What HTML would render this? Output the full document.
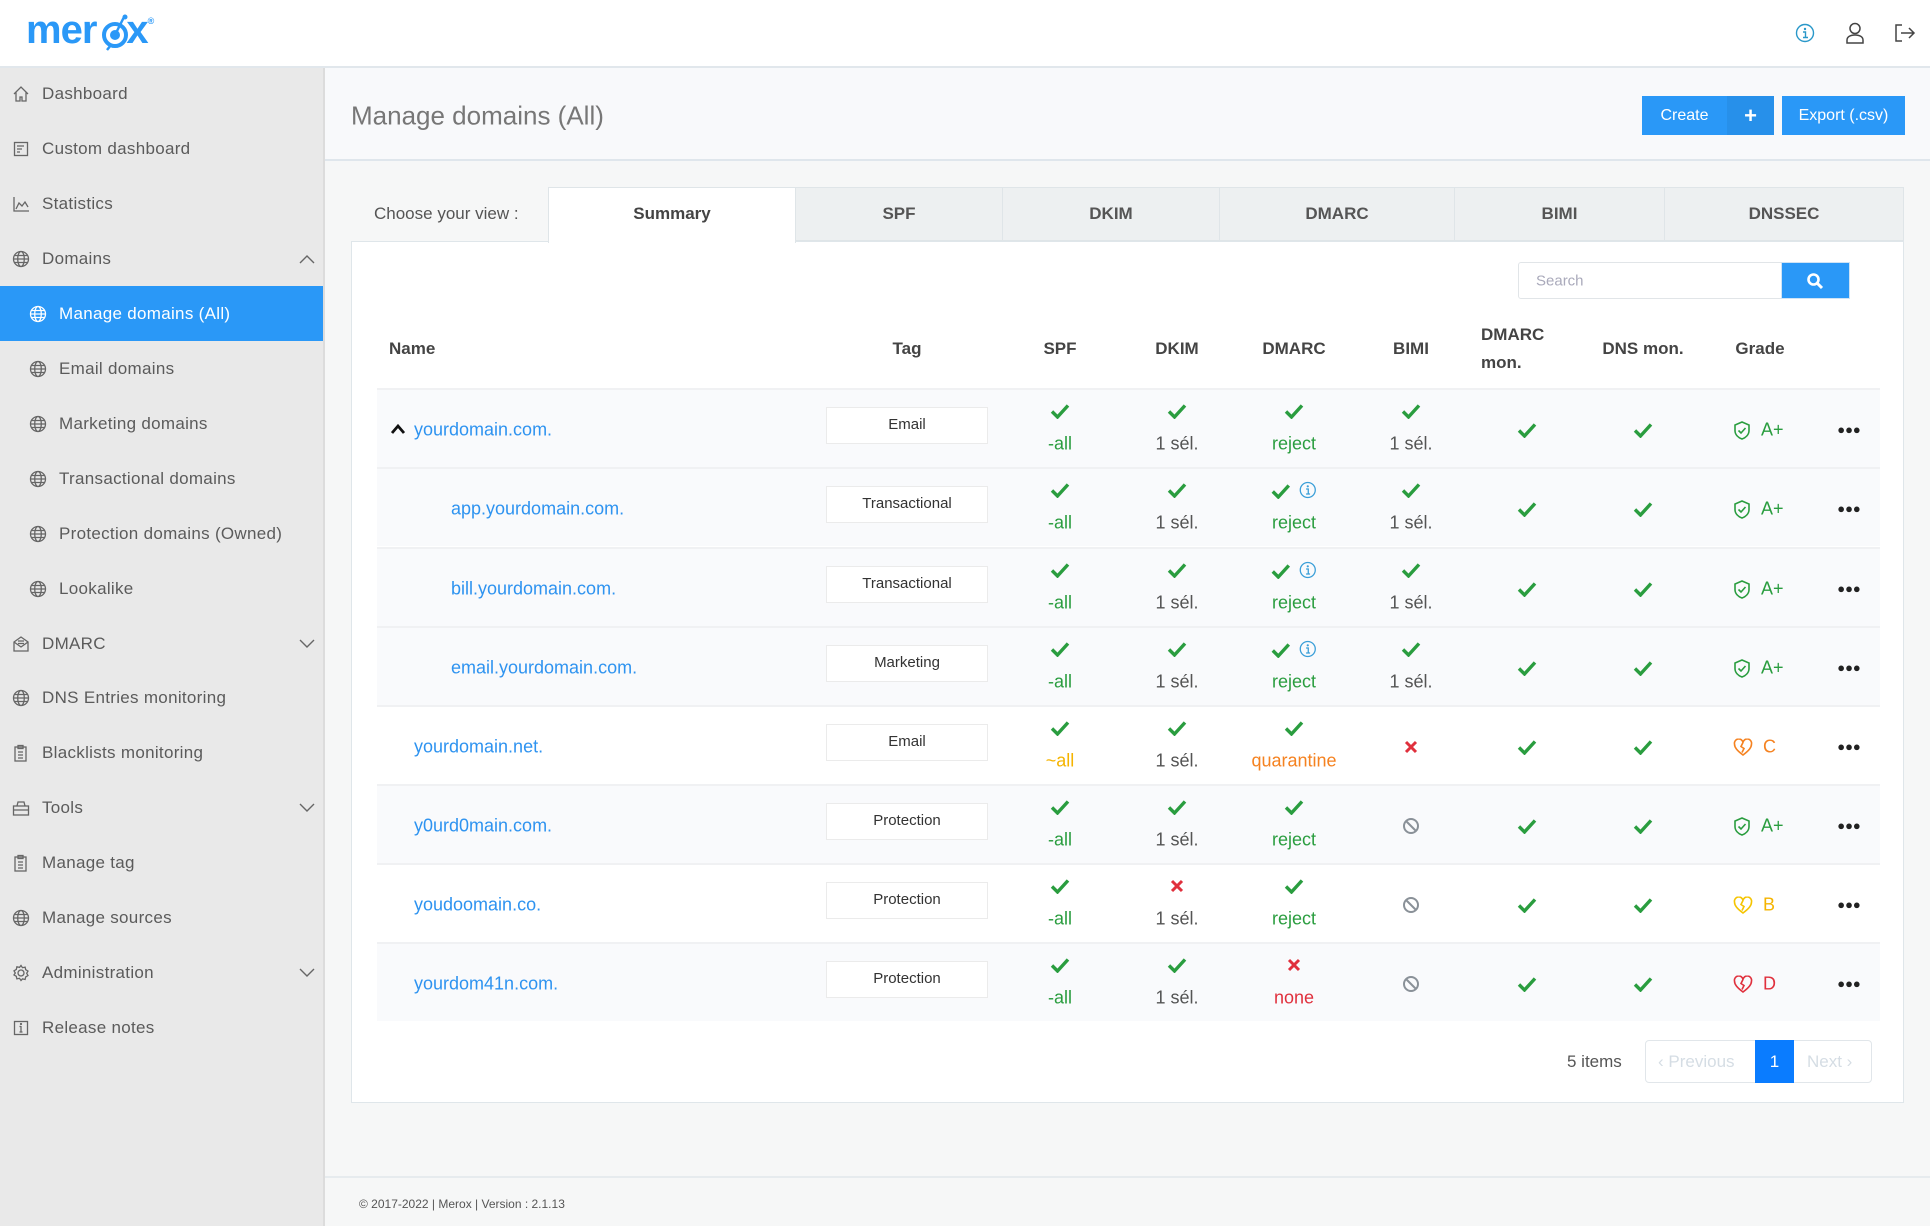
<!DOCTYPE html>
<html><head><meta charset="utf-8">
<style>
*{box-sizing:border-box;margin:0;padding:0}
body{width:1930px;height:1226px;position:relative;overflow:hidden;font-family:"Liberation Sans",sans-serif;background:#f6f7f7;color:#555}
.a{position:absolute}
.c{position:absolute;transform:translate(-50%,-50%);white-space:nowrap}
.l{position:absolute;transform:translateY(-50%);white-space:nowrap}
#hdr{left:0;top:0;width:1930px;height:68px;background:#fff;border-bottom:2px solid #e1e7ec}
#side{left:0;top:68px;width:325px;height:1158px;background:#e9e9e9;border-right:2px solid #dcdcdc}
.nav{position:absolute;left:0;width:323px;height:55px;font-size:17px;color:#5b5b5b;letter-spacing:.3px}
.nav span{position:absolute;left:42px;top:50%;transform:translateY(-50%)}
.nav.sub span{left:59px}
.nav svg{position:absolute;left:12px;top:50%;transform:translateY(-50%)}
.nav.sub svg{left:29px}
.nav .chev{left:auto;right:8px}
.nav.act{background:#2a98f7;color:#fff}
.row{position:absolute;left:377px;width:1503px;height:79px;border-top:2px solid #f0f1f3}
.lt{background:#f9fafc}
.wh{background:#fff}
.dn{position:absolute;top:40px;transform:translateY(-50%);color:#2e93f0;font-size:18px;white-space:nowrap}
.tag{position:absolute;left:449px;top:17px;width:162px;height:37px;background:#fff;border:1.5px solid #ebebeb;font-size:15px;color:#333;text-align:center;line-height:34px}
.ic{position:absolute;transform:translate(-50%,-50%);top:21px;line-height:0}
.mi{position:absolute;transform:translate(-50%,-50%);top:40px;line-height:0}
.st{position:absolute;transform:translate(-50%,-50%);top:54px;font-size:18px;white-space:nowrap}
.g{color:#2a9d3f}.gr{color:#555}.o{color:#f58220}.y{color:#f5b400}.r{color:#e0303d}
.th{position:absolute;font-size:17px;font-weight:bold;color:#444;transform:translate(-50%,-50%);white-space:nowrap}
.grade{position:absolute;top:40px;transform:translateY(-50%);left:1356px;font-size:18px;white-space:nowrap;display:flex;align-items:center;gap:10px}
.dots{position:absolute;left:1472px;top:40px;transform:translate(-50%,-50%);font-size:13px;color:#222;letter-spacing:0px;line-height:0}
.tab{position:absolute;top:187px;height:54px;background:#edf0f1;border:1.5px solid #dfe5e8;font-size:17px;font-weight:bold;color:#555;text-align:center;line-height:52px}
</style></head><body>

<div id="hdr" class="a">
  <div class="a" style="left:26px;top:8px;font-size:40px;font-weight:bold;color:#2a98f7;letter-spacing:-1px;font-family:'Liberation Sans',sans-serif">mer<span style="display:inline-block;width:30px"></span>x<span style="font-size:9px;vertical-align:top;position:relative;top:8px">®</span></div>
  <svg class="a" style="left:98px;top:14px" width="34" height="38" viewBox="0 0 34 38"><circle cx="17" cy="21" r="11" fill="none" stroke="#2a98f7" stroke-width="4"/><circle cx="17" cy="21" r="5" fill="#2a98f7"/><line x1="17" y1="21" x2="26" y2="3" stroke="#2a98f7" stroke-width="2.5"/><circle cx="27" cy="3" r="2.5" fill="#2a98f7"/><line x1="13" y1="31" x2="9" y2="36" stroke="#2a98f7" stroke-width="2.5"/></svg>
  <svg class="a" style="left:1795px;top:23px" width="20" height="20" viewBox="0 0 20 20"><circle cx="10" cy="10" r="8.5" fill="none" stroke="#2a98c9" stroke-width="1.4"/><circle cx="10" cy="6" r="1.2" fill="#2a98c9"/><path d="M8 9h2.5v5.5M8 14.5h5" stroke="#2a98c9" stroke-width="1.4" fill="none"/></svg>
  <svg class="a" style="left:1845px;top:22px" width="20" height="22" viewBox="0 0 20 22"><circle cx="10" cy="6.5" r="5" fill="none" stroke="#444" stroke-width="1.5"/><path d="M2 21v-3c0-3 3-5 8-5s8 2 8 5v3z" fill="none" stroke="#444" stroke-width="1.5"/></svg>
  <svg class="a" style="left:1894px;top:23px" width="22" height="20" viewBox="0 0 22 20"><path d="M8 2H2v16h6" fill="none" stroke="#444" stroke-width="1.5"/><path d="M7 10h13M15 5l5 5-5 5" fill="none" stroke="#444" stroke-width="1.5"/></svg>
</div>

<div id="side" class="a">
<div class="nav" style="top:-2px"><svg width="18" height="18" viewBox="0 0 18 18" fill="none" stroke="#666" stroke-width="1.3"><path d="M2 9L9 2l7 7M4 7.5V16h4v-4h2v4h4V7.5"/></svg><span>Dashboard</span></div>
<div class="nav" style="top:53px"><svg width="18" height="18" viewBox="0 0 18 18" fill="none" stroke="#666" stroke-width="1.3"><rect x="2.5" y="2.5" width="13" height="13"/><path d="M5 6h7M5 9h5M5 12h3"/></svg><span>Custom dashboard</span></div>
<div class="nav" style="top:108px"><svg width="18" height="18" viewBox="0 0 18 18" fill="none" stroke="#666" stroke-width="1.3"><path d="M2 2v14h15M4 14l3-6 3 3 3-4 3 5"/></svg><span>Statistics</span></div>
<div class="nav" style="top:163px"><svg width="18" height="18" viewBox="0 0 18 18" fill="none" stroke="#666" stroke-width="1.3"><circle cx="9" cy="9" r="7.5"/><ellipse cx="9" cy="9" rx="3.3" ry="7.5"/><path d="M1.5 9h15M2.5 5.5h13M2.5 12.5h13"/></svg><span>Domains</span><svg class="chev" width="16" height="10" viewBox="0 0 16 10" fill="none" stroke="#666" stroke-width="1.4"><path d="M1 9l7-7 7 7"/></svg></div>
<div class="nav sub act" style="top:218px"><svg width="18" height="18" viewBox="0 0 18 18" fill="none" stroke="#fff" stroke-width="1.3"><circle cx="9" cy="9" r="7.5"/><ellipse cx="9" cy="9" rx="3.3" ry="7.5"/><path d="M1.5 9h15M2.5 5.5h13M2.5 12.5h13"/></svg><span>Manage domains (All)</span></div>
<div class="nav sub" style="top:273px"><svg width="18" height="18" viewBox="0 0 18 18" fill="none" stroke="#666" stroke-width="1.3"><circle cx="9" cy="9" r="7.5"/><ellipse cx="9" cy="9" rx="3.3" ry="7.5"/><path d="M1.5 9h15M2.5 5.5h13M2.5 12.5h13"/></svg><span>Email domains</span></div>
<div class="nav sub" style="top:328px"><svg width="18" height="18" viewBox="0 0 18 18" fill="none" stroke="#666" stroke-width="1.3"><circle cx="9" cy="9" r="7.5"/><ellipse cx="9" cy="9" rx="3.3" ry="7.5"/><path d="M1.5 9h15M2.5 5.5h13M2.5 12.5h13"/></svg><span>Marketing domains</span></div>
<div class="nav sub" style="top:383px"><svg width="18" height="18" viewBox="0 0 18 18" fill="none" stroke="#666" stroke-width="1.3"><circle cx="9" cy="9" r="7.5"/><ellipse cx="9" cy="9" rx="3.3" ry="7.5"/><path d="M1.5 9h15M2.5 5.5h13M2.5 12.5h13"/></svg><span>Transactional domains</span></div>
<div class="nav sub" style="top:438px"><svg width="18" height="18" viewBox="0 0 18 18" fill="none" stroke="#666" stroke-width="1.3"><circle cx="9" cy="9" r="7.5"/><ellipse cx="9" cy="9" rx="3.3" ry="7.5"/><path d="M1.5 9h15M2.5 5.5h13M2.5 12.5h13"/></svg><span>Protection domains (Owned)</span></div>
<div class="nav sub" style="top:493px"><svg width="18" height="18" viewBox="0 0 18 18" fill="none" stroke="#666" stroke-width="1.3"><circle cx="9" cy="9" r="7.5"/><ellipse cx="9" cy="9" rx="3.3" ry="7.5"/><path d="M1.5 9h15M2.5 5.5h13M2.5 12.5h13"/></svg><span>Lookalike</span></div>
<div class="nav" style="top:548px"><svg width="18" height="18" viewBox="0 0 18 18" fill="none" stroke="#666" stroke-width="1.3"><path d="M2 7l7-5 7 5v9H2z"/><path d="M2 7l7 5 7-5M6 6h6M6 8.5h6"/></svg><span>DMARC</span><svg class="chev" width="16" height="10" viewBox="0 0 16 10" fill="none" stroke="#666" stroke-width="1.4"><path d="M1 1l7 7 7-7"/></svg></div>
<div class="nav" style="top:602px"><svg width="18" height="18" viewBox="0 0 18 18" fill="none" stroke="#666" stroke-width="1.3"><circle cx="9" cy="9" r="7.5"/><ellipse cx="9" cy="9" rx="3.3" ry="7.5"/><path d="M1.5 9h15M2.5 5.5h13M2.5 12.5h13"/></svg><span>DNS Entries monitoring</span></div>
<div class="nav" style="top:657px"><svg width="18" height="18" viewBox="0 0 18 18" fill="none" stroke="#666" stroke-width="1.3"><rect x="3" y="3" width="11" height="14"/><rect x="6" y="1.5" width="5" height="3"/><path d="M6 8h5M6 11h5M6 14h5"/></svg><span>Blacklists monitoring</span></div>
<div class="nav" style="top:712px"><svg width="18" height="18" viewBox="0 0 18 18" fill="none" stroke="#666" stroke-width="1.3"><rect x="1.5" y="7" width="15" height="9"/><path d="M5 7l1-4h6l1 4M1.5 11h15"/></svg><span>Tools</span><svg class="chev" width="16" height="10" viewBox="0 0 16 10" fill="none" stroke="#666" stroke-width="1.4"><path d="M1 1l7 7 7-7"/></svg></div>
<div class="nav" style="top:767px"><svg width="18" height="18" viewBox="0 0 18 18" fill="none" stroke="#666" stroke-width="1.3"><rect x="3" y="3" width="11" height="14"/><rect x="6" y="1.5" width="5" height="3"/><path d="M6 8h5M6 11h5M6 14h5"/></svg><span>Manage tag</span></div>
<div class="nav" style="top:822px"><svg width="18" height="18" viewBox="0 0 18 18" fill="none" stroke="#666" stroke-width="1.3"><circle cx="9" cy="9" r="7.5"/><ellipse cx="9" cy="9" rx="3.3" ry="7.5"/><path d="M1.5 9h15M2.5 5.5h13M2.5 12.5h13"/></svg><span>Manage sources</span></div>
<div class="nav" style="top:877px"><svg width="18" height="18" viewBox="0 0 18 18" fill="none" stroke="#666" stroke-width="1.3"><circle cx="9" cy="9" r="3"/><path d="M9 1.5l1.5 2.2 2.6-.6.6 2.6 2.3 1.4-1.3 2.2 1.3 2.2-2.3 1.4-.6 2.6-2.6-.6L9 16.5l-1.5-2.2-2.6.6-.6-2.6-2.3-1.4L3.3 9 2 6.8l2.3-1.4.6-2.6 2.6.6z"/></svg><span>Administration</span><svg class="chev" width="16" height="10" viewBox="0 0 16 10" fill="none" stroke="#666" stroke-width="1.4"><path d="M1 1l7 7 7-7"/></svg></div>
<div class="nav" style="top:932px"><svg width="18" height="18" viewBox="0 0 18 18" fill="none" stroke="#666" stroke-width="1.3"><rect x="2.5" y="2.5" width="13" height="13"/><path d="M9 7v6M7.5 13h3M7.5 7.5H9"/><circle cx="9" cy="5" r=".5"/></svg><span>Release notes</span></div>
</div>

<div class="a" style="left:325px;top:68px;width:1605px;height:93px;background:#f8f9fb;border-bottom:2px solid #dfe6ec"></div>
<div class="l" style="left:351px;top:116px;font-size:26px;color:#777">Manage domains (All)</div>
<div class="a" style="left:1642px;top:96px;width:85px;height:39px;background:#2a98f7;color:#fff;font-size:16px;text-align:center;line-height:39px">Create</div>
<div class="a" style="left:1727px;top:96px;width:47px;height:39px;background:#2790ea;color:#fff;font-size:22px;font-weight:bold;text-align:center;line-height:39px">+</div>
<div class="a" style="left:1782px;top:96px;width:123px;height:39px;background:#2a98f7;color:#fff;font-size:16px;text-align:center;line-height:39px">Export (.csv)</div>

<div class="l" style="left:374px;top:214px;font-size:17px;color:#555">Choose your view :</div>
<div class="a" style="left:351px;top:241px;width:1553px;height:862px;background:#fff;border:1.5px solid #dfe6ea"></div>
<div class="tab" style="left:548px;width:248px;background:#fff;border-bottom:none;height:56px;color:#444">Summary</div>
<div class="tab" style="left:795px;width:208px">SPF</div>
<div class="tab" style="left:1002px;width:218px">DKIM</div>
<div class="tab" style="left:1219px;width:236px">DMARC</div>
<div class="tab" style="left:1454px;width:211px">BIMI</div>
<div class="tab" style="left:1664px;width:240px">DNSSEC</div>

<div class="a" style="left:1518px;top:262px;width:264px;height:37px;border:1.5px solid #e1e5e8;border-radius:3px 0 0 3px;background:#fff"></div>
<div class="l" style="left:1536px;top:281px;font-size:15px;color:#aab">Search</div>
<div class="a" style="left:1781px;top:262px;width:69px;height:37px;background:#2a98f7;border:1.5px solid #cfe3f5"></div>
<svg class="a" style="left:1806px;top:272px" width="18" height="18" viewBox="0 0 18 18"><circle cx="7.5" cy="7.5" r="5" fill="none" stroke="#fff" stroke-width="2.6"/><path d="M11 11l5 5" stroke="#fff" stroke-width="3"/></svg>

<div class="l" style="left:389px;top:349px;font-size:17px;font-weight:bold;color:#444">Name</div>
<div class="th" style="left:907px;top:349px">Tag</div>
<div class="th" style="left:1060px;top:349px">SPF</div>
<div class="th" style="left:1177px;top:349px">DKIM</div>
<div class="th" style="left:1294px;top:349px">DMARC</div>
<div class="th" style="left:1411px;top:349px">BIMI</div>
<div class="l" style="left:1481px;top:335px;font-size:17px;font-weight:bold;color:#444">DMARC</div>
<div class="l" style="left:1481px;top:363px;font-size:17px;font-weight:bold;color:#444">mon.</div>
<div class="th" style="left:1643px;top:349px">DNS mon.</div>
<div class="th" style="left:1760px;top:349px">Grade</div>

<svg width="0" height="0" style="position:absolute">
<defs>
<symbol id="ck" viewBox="0 0 20 16"><path d="M2 8.5L7.5 14L18 2.5" stroke="#2a9d3f" stroke-width="3.4" fill="none"/></symbol>
<symbol id="xx" viewBox="0 0 14 14"><path d="M2 2L12 12M12 2L2 12" stroke="#e0303d" stroke-width="3" fill="none"/></symbol>
<symbol id="ban" viewBox="0 0 18 18"><circle cx="9" cy="9" r="7" fill="none" stroke="#8a9198" stroke-width="2"/><path d="M4 4L14 14" stroke="#8a9198" stroke-width="2"/></symbol>
<symbol id="inf" viewBox="0 0 18 18"><circle cx="9" cy="9" r="7.5" fill="none" stroke="#3b9fd8" stroke-width="1.3"/><circle cx="9" cy="5.3" r="1.1" fill="#3b9fd8"/><path d="M7.3 8h2.2v5M7.3 13h4" stroke="#3b9fd8" stroke-width="1.3" fill="none"/></symbol>
<symbol id="sh" viewBox="0 0 18 20"><path d="M9 1.5L16 4.5V10c0 4-3 7-7 8.5C5 17 2 14 2 10V4.5z" fill="none" stroke="#2a9d3f" stroke-width="1.6"/><path d="M5.5 10l2.5 2.5 4.5-5" stroke="#2a9d3f" stroke-width="1.6" fill="none"/></symbol>
<symbol id="ho" viewBox="0 0 20 18"><path d="M10 16.5C4 12 1.5 9 1.5 5.5A4 4 0 0 1 10 4a4 4 0 0 1 8.5 1.5c0 3.5-2.5 6.5-8.5 11zM10 4L8 8l3 2-2 4" fill="none" stroke="#f58220" stroke-width="1.6"/></symbol>
<symbol id="hy" viewBox="0 0 20 18"><path d="M10 16.5C4 12 1.5 9 1.5 5.5A4 4 0 0 1 10 4a4 4 0 0 1 8.5 1.5c0 3.5-2.5 6.5-8.5 11zM10 4L8 8l3 2-2 4" fill="none" stroke="#f5c400" stroke-width="1.6"/></symbol>
<symbol id="hr" viewBox="0 0 20 18"><path d="M10 16.5C4 12 1.5 9 1.5 5.5A4 4 0 0 1 10 4a4 4 0 0 1 8.5 1.5c0 3.5-2.5 6.5-8.5 11zM10 4L8 8l3 2-2 4" fill="none" stroke="#e0303d" stroke-width="1.6"/></symbol>
</defs></svg>

<div class="row lt" style="top:388px">
 <svg class="a" style="left:13px;top:33px" width="16" height="12" viewBox="0 0 16 12"><path d="M2 10L8 3l6 7" stroke="#111" stroke-width="2.8" fill="none"/></svg>
 <div class="dn" style="left:37px">yourdomain.com.</div>
 <div class="tag">Email</div>
 <div class="ic" style="left:683px"><svg width="20" height="16"><use href="#ck"/></svg></div><div class="st g" style="left:683px">-all</div>
 <div class="ic" style="left:800px"><svg width="20" height="16"><use href="#ck"/></svg></div><div class="st gr" style="left:800px">1 sél.</div>
 <div class="ic" style="left:917px"><svg width="20" height="16"><use href="#ck"/></svg></div><div class="st g" style="left:917px">reject</div>
 <div class="ic" style="left:1034px"><svg width="20" height="16"><use href="#ck"/></svg></div><div class="st gr" style="left:1034px">1 sél.</div>
 <div class="mi" style="left:1150px"><svg width="20" height="16"><use href="#ck"/></svg></div>
 <div class="mi" style="left:1266px"><svg width="20" height="16"><use href="#ck"/></svg></div>
 <div class="grade g"><svg width="18" height="20"><use href="#sh"/></svg>A+</div>
 <div class="dots">●●●</div>
</div>
<div class="row lt" style="top:467px">
 <div class="dn" style="left:74px">app.yourdomain.com.</div>
 <div class="tag">Transactional</div>
 <div class="ic" style="left:683px"><svg width="20" height="16"><use href="#ck"/></svg></div><div class="st g" style="left:683px">-all</div>
 <div class="ic" style="left:800px"><svg width="20" height="16"><use href="#ck"/></svg></div><div class="st gr" style="left:800px">1 sél.</div>
 <div class="ic" style="left:917px"><svg width="20" height="16"><use href="#ck"/></svg> <svg width="18" height="18" style="margin-left:4px"><use href="#inf"/></svg></div><div class="st g" style="left:917px">reject</div>
 <div class="ic" style="left:1034px"><svg width="20" height="16"><use href="#ck"/></svg></div><div class="st gr" style="left:1034px">1 sél.</div>
 <div class="mi" style="left:1150px"><svg width="20" height="16"><use href="#ck"/></svg></div>
 <div class="mi" style="left:1266px"><svg width="20" height="16"><use href="#ck"/></svg></div>
 <div class="grade g"><svg width="18" height="20"><use href="#sh"/></svg>A+</div>
 <div class="dots">●●●</div>
</div>
<div class="row lt" style="top:547px">
 <div class="dn" style="left:74px">bill.yourdomain.com.</div>
 <div class="tag">Transactional</div>
 <div class="ic" style="left:683px"><svg width="20" height="16"><use href="#ck"/></svg></div><div class="st g" style="left:683px">-all</div>
 <div class="ic" style="left:800px"><svg width="20" height="16"><use href="#ck"/></svg></div><div class="st gr" style="left:800px">1 sél.</div>
 <div class="ic" style="left:917px"><svg width="20" height="16"><use href="#ck"/></svg> <svg width="18" height="18" style="margin-left:4px"><use href="#inf"/></svg></div><div class="st g" style="left:917px">reject</div>
 <div class="ic" style="left:1034px"><svg width="20" height="16"><use href="#ck"/></svg></div><div class="st gr" style="left:1034px">1 sél.</div>
 <div class="mi" style="left:1150px"><svg width="20" height="16"><use href="#ck"/></svg></div>
 <div class="mi" style="left:1266px"><svg width="20" height="16"><use href="#ck"/></svg></div>
 <div class="grade g"><svg width="18" height="20"><use href="#sh"/></svg>A+</div>
 <div class="dots">●●●</div>
</div>
<div class="row lt" style="top:626px">
 <div class="dn" style="left:74px">email.yourdomain.com.</div>
 <div class="tag">Marketing</div>
 <div class="ic" style="left:683px"><svg width="20" height="16"><use href="#ck"/></svg></div><div class="st g" style="left:683px">-all</div>
 <div class="ic" style="left:800px"><svg width="20" height="16"><use href="#ck"/></svg></div><div class="st gr" style="left:800px">1 sél.</div>
 <div class="ic" style="left:917px"><svg width="20" height="16"><use href="#ck"/></svg> <svg width="18" height="18" style="margin-left:4px"><use href="#inf"/></svg></div><div class="st g" style="left:917px">reject</div>
 <div class="ic" style="left:1034px"><svg width="20" height="16"><use href="#ck"/></svg></div><div class="st gr" style="left:1034px">1 sél.</div>
 <div class="mi" style="left:1150px"><svg width="20" height="16"><use href="#ck"/></svg></div>
 <div class="mi" style="left:1266px"><svg width="20" height="16"><use href="#ck"/></svg></div>
 <div class="grade g"><svg width="18" height="20"><use href="#sh"/></svg>A+</div>
 <div class="dots">●●●</div>
</div>
<div class="row wh" style="top:705px">
 <div class="dn" style="left:37px">yourdomain.net.</div>
 <div class="tag">Email</div>
 <div class="ic" style="left:683px"><svg width="20" height="16"><use href="#ck"/></svg></div><div class="st y" style="left:683px">~all</div>
 <div class="ic" style="left:800px"><svg width="20" height="16"><use href="#ck"/></svg></div><div class="st gr" style="left:800px">1 sél.</div>
 <div class="ic" style="left:917px"><svg width="20" height="16"><use href="#ck"/></svg></div><div class="st o" style="left:917px">quarantine</div>
 <div class="mi" style="left:1034px"><svg width="14" height="14"><use href="#xx"/></svg></div>
 <div class="mi" style="left:1150px"><svg width="20" height="16"><use href="#ck"/></svg></div>
 <div class="mi" style="left:1266px"><svg width="20" height="16"><use href="#ck"/></svg></div>
 <div class="grade o"><svg width="20" height="18"><use href="#ho"/></svg>C</div>
 <div class="dots">●●●</div>
</div>
<div class="row lt" style="top:784px">
 <div class="dn" style="left:37px">y0urd0main.com.</div>
 <div class="tag">Protection</div>
 <div class="ic" style="left:683px"><svg width="20" height="16"><use href="#ck"/></svg></div><div class="st g" style="left:683px">-all</div>
 <div class="ic" style="left:800px"><svg width="20" height="16"><use href="#ck"/></svg></div><div class="st gr" style="left:800px">1 sél.</div>
 <div class="ic" style="left:917px"><svg width="20" height="16"><use href="#ck"/></svg></div><div class="st g" style="left:917px">reject</div>
 <div class="mi" style="left:1034px"><svg width="18" height="18"><use href="#ban"/></svg></div>
 <div class="mi" style="left:1150px"><svg width="20" height="16"><use href="#ck"/></svg></div>
 <div class="mi" style="left:1266px"><svg width="20" height="16"><use href="#ck"/></svg></div>
 <div class="grade g"><svg width="18" height="20"><use href="#sh"/></svg>A+</div>
 <div class="dots">●●●</div>
</div>
<div class="row wh" style="top:863px">
 <div class="dn" style="left:37px">youdoomain.co.</div>
 <div class="tag">Protection</div>
 <div class="ic" style="left:683px"><svg width="20" height="16"><use href="#ck"/></svg></div><div class="st g" style="left:683px">-all</div>
 <div class="ic" style="left:800px"><svg width="14" height="14"><use href="#xx"/></svg></div><div class="st gr" style="left:800px">1 sél.</div>
 <div class="ic" style="left:917px"><svg width="20" height="16"><use href="#ck"/></svg></div><div class="st g" style="left:917px">reject</div>
 <div class="mi" style="left:1034px"><svg width="18" height="18"><use href="#ban"/></svg></div>
 <div class="mi" style="left:1150px"><svg width="20" height="16"><use href="#ck"/></svg></div>
 <div class="mi" style="left:1266px"><svg width="20" height="16"><use href="#ck"/></svg></div>
 <div class="grade y"><svg width="20" height="18"><use href="#hy"/></svg>B</div>
 <div class="dots">●●●</div>
</div>
<div class="row lt" style="top:942px">
 <div class="dn" style="left:37px">yourdom41n.com.</div>
 <div class="tag">Protection</div>
 <div class="ic" style="left:683px"><svg width="20" height="16"><use href="#ck"/></svg></div><div class="st g" style="left:683px">-all</div>
 <div class="ic" style="left:800px"><svg width="20" height="16"><use href="#ck"/></svg></div><div class="st gr" style="left:800px">1 sél.</div>
 <div class="ic" style="left:917px"><svg width="14" height="14"><use href="#xx"/></svg></div><div class="st r" style="left:917px">none</div>
 <div class="mi" style="left:1034px"><svg width="18" height="18"><use href="#ban"/></svg></div>
 <div class="mi" style="left:1150px"><svg width="20" height="16"><use href="#ck"/></svg></div>
 <div class="mi" style="left:1266px"><svg width="20" height="16"><use href="#ck"/></svg></div>
 <div class="grade r"><svg width="20" height="18"><use href="#hr"/></svg>D</div>
 <div class="dots">●●●</div>
</div>

<div class="l" style="left:1567px;top:1062px;font-size:17px;color:#555">5 items</div>
<div class="a" style="left:1645px;top:1040px;width:227px;height:43px;border:1.5px solid #e1e6ea;border-radius:4px;background:#fff"></div>
<div class="l" style="left:1658px;top:1062px;font-size:17px;color:#d5dde4">‹ Previous</div>
<div class="a" style="left:1755px;top:1040px;width:39px;height:43px;background:#0a7cff;color:#fff;font-size:17px;text-align:center;line-height:43px">1</div>
<div class="l" style="left:1807px;top:1062px;font-size:17px;color:#d5dde4">Next ›</div>

<div class="a" style="left:325px;top:1176px;width:1605px;height:2px;background:#e6ebee"></div>
<div class="l" style="left:359px;top:1204px;font-size:12px;color:#555">© 2017-2022 | Merox | Version : 2.1.13</div>
</body></html>
